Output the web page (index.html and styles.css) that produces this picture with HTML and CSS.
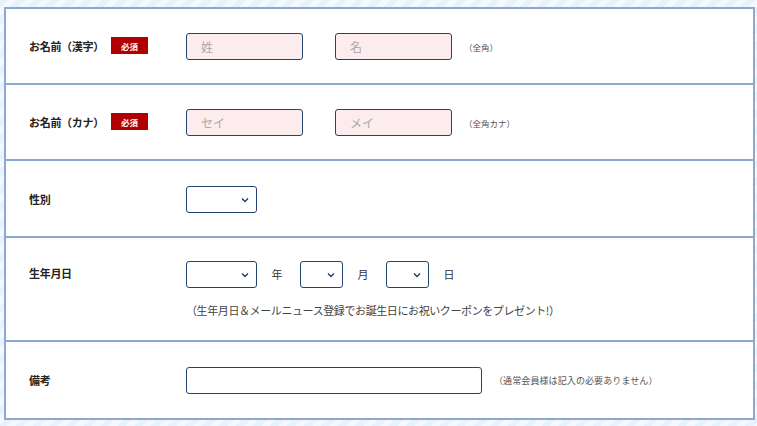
FILE: index.html
```html
<!DOCTYPE html>
<html lang="ja">
<head>
<meta charset="utf-8">
<link rel="stylesheet" href="styles.css">
</head>
<body>
<div class="frame">
  <div class="row">
    <div class="head"><span class="label">お名前（漢字）</span><span class="badge">必須</span></div>
    <div class="field">
      <div class="input pink w116"><span class="ph">姓</span></div>
      <div class="input pink w116 gap33"><span class="ph">名</span></div>
      <span class="hint">（全角）</span>
    </div>
  </div>
  <div class="row">
    <div class="head"><span class="label">お名前（カナ）</span><span class="badge">必須</span></div>
    <div class="field">
      <div class="input pink w116"><span class="ph">セイ</span></div>
      <div class="input pink w116 gap33"><span class="ph">メイ</span></div>
      <span class="hint">（全角カナ）</span>
    </div>
  </div>
  <div class="row r3">
    <div class="head"><span class="label">性別</span></div>
    <div class="field">
      <div class="select w71"><svg width="8" height="6" viewBox="0 0 8 6"><path d="M1 1.5 L4 4.5 L7 1.5" fill="none" stroke="#1e3d66" stroke-width="1.4"/></svg></div>
    </div>
  </div>
  <div class="row r4">
    <div class="head top"><span class="label">生年月日</span></div>
    <div class="col">
      <div class="field">
        <div class="select w71"><svg width="8" height="6" viewBox="0 0 8 6"><path d="M1 1.5 L4 4.5 L7 1.5" fill="none" stroke="#1e3d66" stroke-width="1.4"/></svg></div>
        <span class="unit">年</span>
        <div class="select w43"><svg width="8" height="6" viewBox="0 0 8 6"><path d="M1 1.5 L4 4.5 L7 1.5" fill="none" stroke="#1e3d66" stroke-width="1.4"/></svg></div>
        <span class="unit">月</span>
        <div class="select w43"><svg width="8" height="6" viewBox="0 0 8 6"><path d="M1 1.5 L4 4.5 L7 1.5" fill="none" stroke="#1e3d66" stroke-width="1.4"/></svg></div>
        <span class="unit">日</span>
      </div>
      <p class="note">（生年月日＆メールニュース登録でお誕生日にお祝いクーポンをプレゼント!）</p>
    </div>
  </div>
  <div class="row r5">
    <div class="head"><span class="label">備考</span></div>
    <div class="field">
      <div class="input w296"></div>
      <span class="hint h15">（通常会員様は記入の必要ありません）</span>
    </div>
  </div>
</div>
</body>
</html>
```
FILE: styles.css
```css
html, body {
  margin: 0;
  padding: 0;
}
body {
  width: 757px;
  height: 426px;
  overflow: hidden;
  background: repeating-linear-gradient(135deg, #e7f3fc 0 6px, #f3f9fe 6px 12px);
  font-family: "Noto Sans CJK JP", "Noto Sans", sans-serif;
  color: #333;
  padding: 7px 0 0 4px;
  box-sizing: border-box;
}
.frame {
  width: 751px;
  border: 2px solid #8ea8d2;
  background: #fff;
  box-sizing: border-box;
}
.row {
  display: flex;
  align-items: center;
  padding: 24px 0 23px 23px;
  border-bottom: 2px solid #8ea8d2;
}
.row:last-child {
  border-bottom: none;
}
.r3 {
  padding: 25px 0 23px 23px;
}
.r4 {
  align-items: flex-start;
  padding: 23px 0 22px 23px;
}
.r5 {
  padding: 25px 0 24px 23px;
}
.head {
  width: 157px;
  display: flex;
  align-items: center;
  flex-shrink: 0;
  margin-top: -2px;
}
.head.top {
  height: 27px;
}
.label {
  width: 82px;
  font-size: 11px;
  font-weight: bold;
  color: #222;
  letter-spacing: -0.3px;
  white-space: nowrap;
}
.badge {
  width: 37px;
  height: 17px;
  background: #b00000;
  color: #fff;
  font-size: 8.5px;
  font-weight: bold;
  display: flex;
  align-items: center;
  justify-content: center;
}
.field {
  display: flex;
  align-items: center;
}
.col {
  display: flex;
  flex-direction: column;
}
.input, .select {
  height: 27px;
  border: 1px solid #23446f;
  border-radius: 3px;
  box-sizing: border-box;
  background: #fff;
  display: flex;
  align-items: center;
}
.pink {
  background: #fdeced;
}
.w116 { width: 117px; }
.w296 { width: 296px; }
.w71 { width: 71px; }
.w43 { width: 43px; }
.gap33 { margin-left: 32px; }
.ph {
  padding-left: 14px;
  font-size: 12px;
  color: #a8a8a8;
}
.select {
  justify-content: flex-end;
  padding-right: 7px;
}
.select svg {
  display: block;
}
.hint {
  margin-left: 12px;
  font-size: 8.5px;
  color: #555;
  white-space: nowrap;
}
.h15 {
  margin-left: 12px;
  font-size: 9px;
  letter-spacing: 0.1px;
}
.unit {
  font-size: 11px;
  color: #333;
  width: 43px;
  text-align: center;
  margin-top: -1px;
  text-indent: -3px;
}
.note {
  margin: 14px 0 0 0;
  font-size: 11px;
  line-height: 16px;
  color: #444;
  letter-spacing: -0.4px;
  white-space: nowrap;
}
```
